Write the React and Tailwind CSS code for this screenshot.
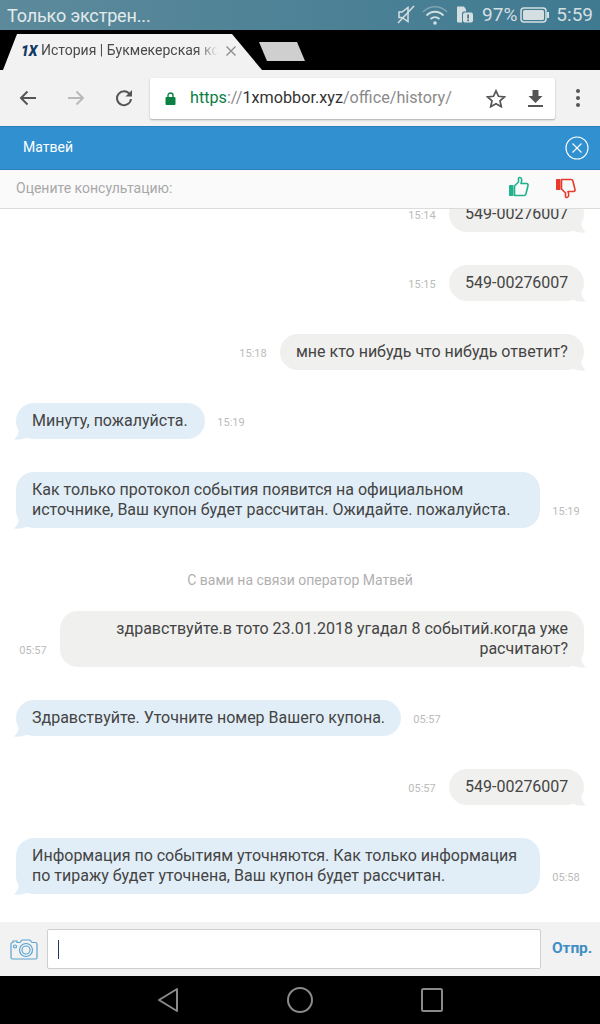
import React from "react";

const messages = [
  { side: "me", time: "15:14", lines: ["549-00276007"], w: "w-[135px]" },
  { side: "me", time: "15:15", lines: ["549-00276007"], w: "w-[135px]" },
  { side: "me", time: "15:18", lines: ["мне кто нибудь что нибудь ответит?"], w: "w-[304px]" },
  { side: "op", time: "15:19", lines: ["Минуту, пожалуйста."], w: "w-[189px]" },
  {
    side: "op",
    time: "15:19",
    lines: ["Как только протокол события появится на официальном", "источнике, Ваш купон будет рассчитан. Ожидайте. пожалуйста."],
    w: "w-[524px]",
  },
  { side: "sys", text: "С вами на связи оператор Матвей" },
  {
    side: "me",
    time: "05:57",
    lines: ["здравствуйте.в тото 23.01.2018 угадал 8 событий.когда уже", "расчитают?"],
    w: "w-[524px]",
  },
  { side: "op", time: "05:57", lines: ["Здравствуйте. Уточните номер Вашего купона."], w: "w-[385px]" },
  { side: "me", time: "05:57", lines: ["549-00276007"], w: "w-[135px]" },
  {
    side: "op",
    time: "05:58",
    lines: ["Информация по событиям уточняются. Как только информация", "по тиражу будет уточнена, Ваш купон будет рассчитан."],
    w: "w-[524px]",
  },
];

const StatusIcons = () => (
  <>
    <svg width="18" height="20" viewBox="0 0 18 20" fill="none" stroke="#d5dfe2" strokeWidth="1.5">
      <path d="M2 7h3l6-4.5v14L5 12.5H2z" />
      <path d="M1 18 L17 1" />
    </svg>
    <svg width="26" height="20" viewBox="0 0 26 20" fill="none" className="ml-[7px]">
      <path d="M1 7C8 0 18 0 25 7" stroke="#7fa3b1" strokeWidth="1.6" />
      <path d="M4.5 10.5C9.5 5.5 16.5 5.5 21.5 10.5" stroke="#d5dfe2" strokeWidth="1.8" />
      <path d="M8.5 14C11.5 11.5 14.5 11.5 17.5 14" stroke="#d5dfe2" strokeWidth="1.8" />
      <circle cx="13" cy="18" r="1.8" fill="#d5dfe2" />
    </svg>
    <svg width="18" height="20" viewBox="0 0 18 20" className="ml-[8px]">
      <path d="M1 2.5a1 1 0 0 1 1-1h6l2 3v2H8a2 2 0 0 0-2 2v9H2a1 1 0 0 1-1-1z" fill="#d5dfe2" />
      <rect x="7" y="7.5" width="10" height="10" rx="2" fill="#d5dfe2" />
      <rect x="11.2" y="9.5" width="1.8" height="4" fill="#47798c" />
      <rect x="11.2" y="14.4" width="1.8" height="1.8" fill="#47798c" />
    </svg>
  </>
);

const Battery = () => (
  <svg width="30" height="18" viewBox="0 0 30 18" fill="none" className="ml-[3px]">
    <rect x="1" y="2" width="25" height="14" rx="3" stroke="#d5dfe2" strokeWidth="1.5" />
    <rect x="3" y="4" width="21" height="10" rx="1.5" fill="#d5dfe2" />
    <rect x="27" y="6" width="2" height="6" fill="#d5dfe2" />
  </svg>
);

const Bubble = ({ m }) => {
  const me = m.side === "me";
  const multi = m.lines.length > 1;
  return (
    <div className={`relative ${m.w} px-4 py-2 rounded-[18px] text-[16px] leading-[20px] text-[#444444] ${me ? "bg-[#f0f0ee]" : "bg-[#e1eef7]"} ${me && multi ? "text-right" : ""}`}>
      {m.lines.map((l) => (
        <div key={l} className="whitespace-nowrap">{l}</div>
      ))}
      <svg
        width="20"
        height="12"
        viewBox="0 0 20 12"
        className={`absolute bottom-[-1px] ${me ? "right-[-3px]" : "left-[-3px]"}`}
      >
        {me ? (
          <path d="M0 0h14c0 5 2 9 5 11.5C14 12 8 11 4 9z" fill="#f0f0ee" />
        ) : (
          <path d="M20 0H6C6 5 4 9 1 11.5 6 12 12 11 16 9z" fill="#e1eef7" />
        )}
      </svg>
    </div>
  );
};

const Row = ({ m }) => {
  if (m.side === "sys") {
    return <div className="mt-[11px] mb-[-10px] h-[16px] leading-[16px] text-center text-[14px] text-[#b0b0b0]">{m.text}</div>;
  }
  const time = <div className="w-[28px] mb-[10px] text-[11px] leading-[12px] text-[#bbbbbb] text-center whitespace-nowrap">{m.time}</div>;
  const me = m.side === "me";
  return (
    <div className={`flex items-end ${me ? "justify-end" : "justify-start"}`}>
      {me && <div className="mr-[13px]">{time}</div>}
      <Bubble m={m} />
      {!me && <div className="ml-[12px]">{time}</div>}
    </div>
  );
};

export default function App() {
  return (
    <div className="w-[600px] h-[1024px] flex flex-col overflow-hidden bg-white font-['Roboto',sans-serif]">
      {/* status bar */}
      <div className="h-[30px] shrink-0 flex items-center pl-[7px] pr-[7px] bg-gradient-to-r from-[#5c8a9b] to-[#3f7a91] text-[#e3eaec]">
        <span className="text-[18px] tracking-[-0.15px]">Только экстрен...</span>
        <div className="ml-auto flex items-center">
          <StatusIcons />
          <span className="ml-[8px] text-[19px] text-[#d5dfe2]">97%</span>
          <Battery />
          <span className="ml-[6px] text-[19px] text-[#d5dfe2]">5:59</span>
        </div>
      </div>

      {/* tabs */}
      <div className="h-[40px] shrink-0 bg-black flex items-end">
        <div className="ml-[3px] w-[259px] h-[36px] bg-[#f2f2f2] [clip-path:polygon(14px_0,229px_0,259px_100%,0_100%)] flex items-center pl-[18px] pr-[22px] pb-[3px]">
          <span className="w-[18px] text-[14px] leading-none font-black italic text-[#123a66]">1X</span>
          <span className="ml-[2px] w-[177px] overflow-hidden whitespace-nowrap text-[14px] text-[#4a4a4a] [mask-image:linear-gradient(to_right,black_88%,transparent)]">
            История | Букмекерская контора
          </span>
          <svg width="10" height="10" viewBox="0 0 10 10" className="ml-[8px]" stroke="#8a8a8a" strokeWidth="1.3">
            <path d="M0.5 0.5l9 9M9.5 0.5l-9 9" />
          </svg>
        </div>
        <div className="ml-[-3px] mb-[9px] w-[46px] h-[19px] bg-[#cfcfcf] [clip-path:polygon(0_0,38px_0,46px_100%,8px_100%)]" />
      </div>

      {/* toolbar */}
      <div className="h-[56px] shrink-0 bg-[#f2f2f2] flex items-center">
        <div className="w-[150px] flex items-center shrink-0">
          <svg width="18" height="16" viewBox="0 0 18 16" fill="none" stroke="#555" strokeWidth="2" className="ml-[19px]">
            <path d="M17 8H2M8.5 1.5 2 8l6.5 6.5" />
          </svg>
          <svg width="18" height="16" viewBox="0 0 18 16" fill="none" stroke="#b9b9b9" strokeWidth="2" className="ml-[30px]">
            <path d="M1 8h15M9.5 1.5 16 8l-6.5 6.5" />
          </svg>
          <svg width="18" height="18" viewBox="0 0 18 18" fill="none" className="ml-[30px]">
            <path d="M14.8 5.2A7 7 0 1 0 16 10" stroke="#555" strokeWidth="2" />
            <path d="M17 1v6.5h-6.5z" fill="#555" />
          </svg>
        </div>
        <div className="w-[405px] h-[41px] shrink-0 bg-white rounded-[2px] shadow-[0_1px_2px_rgba(0,0,0,0.3)] flex items-center">
          <svg width="11" height="13" viewBox="0 0 11 13" className="ml-[15px]">
            <rect x="0.5" y="5" width="10" height="8" rx="1" fill="#0b8043" />
            <path d="M3 5.5V3.5a2.5 2.5 0 0 1 5 0v2" fill="none" stroke="#0b8043" strokeWidth="1.4" />
          </svg>
          <span className="ml-[14px] text-[16.2px] whitespace-nowrap">
            <span className="text-[#0b8043]">https</span>
            <span className="text-[#8a8a8a]">://</span>
            <span className="text-[#333]">1xmobbor.xyz</span>
            <span className="text-[#8a8a8a]">/office/history/</span>
          </span>
          <svg width="20" height="19" viewBox="0 0 20 19" fill="none" stroke="#555" strokeWidth="1.7" className="ml-auto">
            <path d="M10 1.8l2.5 5.5 6 .6-4.5 4 1.3 5.8L10 14.8l-5.3 2.9L6 11.9l-4.5-4 6-.6z" />
          </svg>
          <svg width="15" height="17" viewBox="0 0 15 17" className="ml-[22px] mr-[12px]" fill="#555">
            <path d="M4.5 0h6v6h4l-7 7-7-7h4z" />
            <rect x="0" y="15" width="15" height="2" />
          </svg>
        </div>
        <div className="flex-1 flex flex-col items-center gap-[3px]">
          <span className="w-[4px] h-[4px] rounded-full bg-[#555]" />
          <span className="w-[4px] h-[4px] rounded-full bg-[#555]" />
          <span className="w-[4px] h-[4px] rounded-full bg-[#555]" />
        </div>
      </div>

      {/* chat header */}
      <div className="h-[44px] shrink-0 bg-[#3190d0] border-t border-[#2a7fb8] border-b flex items-center pl-[23px] pr-[11px] text-white text-[14px]">
        <span className="mt-[-2px]">Матвей</span>
        <svg width="24" height="24" viewBox="0 0 24 24" fill="none" stroke="white" strokeWidth="1.1" className="ml-auto">
          <circle cx="12" cy="12" r="11" />
          <path d="M7.5 7.5l9 9M16.5 7.5l-9 9" />
        </svg>
      </div>

      {/* rating */}
      <div className="h-[39px] shrink-0 bg-[#fafafa] border-b border-[#dcdcdc] flex items-center pl-[16px] text-[14px] text-[#a8a8a8]">
        <span className="mt-[-2px]">Оцените консультацию:</span>
        <svg width="21" height="22" viewBox="0 0 21 22" fill="none" className="ml-auto mt-[-4px]">
          <rect x="1" y="9" width="4.5" height="11" rx="0.8" fill="#1fb28d" />
          <path d="M6.5 10 10.5 6V2.5c0-1.5 3.2-1.5 3.2 1.5 0 1.5-.7 3.5-.7 3.5h5.5c1.5 0 1.8 1.3 1.4 2.5l-2 8c-.3 1-1 1.5-2 1.5H6.5z" stroke="#1fb28d" strokeWidth="1.6" strokeLinejoin="round" />
        </svg>
        <svg width="21" height="22" viewBox="0 0 21 22" fill="none" className="ml-[26px] mr-[24px] mt-[-2px]">
          <rect x="1" y="2" width="4.5" height="11" rx="0.8" fill="#e8392c" />
          <path d="M6.5 12 10.5 16v3.5c0 1.5 3.2 1.5 3.2-1.5 0-1.5-.7-3.5-.7-3.5h5.5c1.5 0 1.8-1.3 1.4-2.5l-2-8c-.3-1-1-1.5-2-1.5H6.5z" stroke="#e8392c" strokeWidth="1.6" strokeLinejoin="round" />
        </svg>
      </div>

      {/* messages */}
      <div className="flex-1 min-h-0 overflow-hidden px-[16px]">
        <div className="mt-[-13px] flex flex-col gap-[33px]">
          {messages.map((m, i) => (
            <Row key={i} m={m} />
          ))}
        </div>
      </div>

      {/* input */}
      <div className="h-[54px] shrink-0 bg-[#f2f2f2] flex items-center">
        <svg width="28" height="22" viewBox="0 0 28 22" fill="none" stroke="#5ba3d0" strokeWidth="1.2" className="ml-[10px]">
          <path d="M3 4.5V3h4v1.5h3L12 2h8l2 2.5h3.5a1.5 1.5 0 0 1 1.5 1.5v13.5a1.5 1.5 0 0 1-1.5 1.5h-23A1.5 1.5 0 0 1 1 19.5V6a1.5 1.5 0 0 1 1.5-1.5z" />
          <circle cx="16" cy="12" r="6.5" />
          <circle cx="16" cy="12" r="4" />
          <circle cx="5" cy="8.5" r="1.5" />
        </svg>
        <div className="ml-[9px] w-[494px] h-[40px] bg-white border border-[#cfcfcf] rounded-[2px] flex items-center pl-[10px]">
          <div className="w-[1px] h-[19px] bg-[#1f3b63]" />
        </div>
        <span className="ml-[11px] text-[15.5px] font-bold tracking-[-0.1px] text-[#3f8fc4]">Отпр.</span>
      </div>

      {/* nav bar */}
      <div className="h-[48px] shrink-0 bg-black flex items-center">
        <svg width="22" height="26" viewBox="0 0 22 26" fill="none" stroke="#8a8a8a" strokeWidth="2" strokeLinejoin="round" className="ml-[157px]">
          <path d="M20 2v22L2 13z" />
        </svg>
        <svg width="26" height="26" viewBox="0 0 26 26" fill="none" stroke="#8a8a8a" strokeWidth="2" className="ml-[108px]">
          <circle cx="13" cy="13" r="12" />
        </svg>
        <svg width="22" height="24" viewBox="0 0 22 24" fill="none" stroke="#8a8a8a" strokeWidth="2" className="ml-[108px]">
          <rect x="1" y="1" width="20" height="22" rx="1.5" />
        </svg>
      </div>
    </div>
  );
}
